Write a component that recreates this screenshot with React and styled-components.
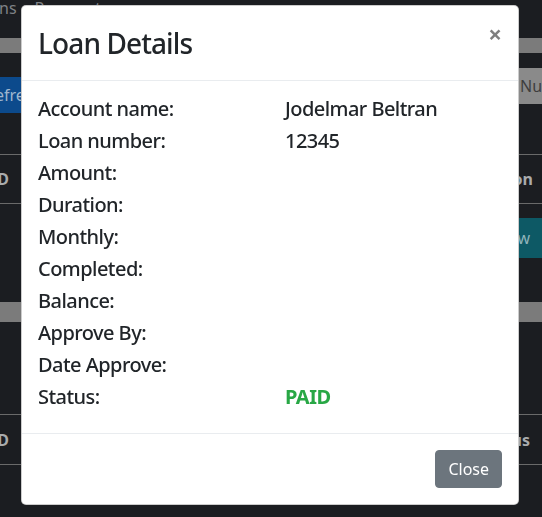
import styled, { createGlobalStyle } from "styled-components";

const GlobalStyle = createGlobalStyle`
  html, body {
    margin: 0;
    padding: 0;
    background: #1b1d21;
    overflow: hidden;
  }
  body {
    font-family: "Noto Sans", "Open Sans", sans-serif;
    color: #212529;
  }
`;

const Page = styled.div`
  width: 542px;
  height: 517px;
  overflow: hidden;
  display: flex;
  flex-direction: column;
  background: #1b1d21;
`;

const Nav = styled.nav`
  display: flex;
  gap: 18px;
  margin: -4px 0 0 -28px;
  height: 24px;
  font-size: 16px;
  line-height: 24px;
  color: #7f8286;
`;

const Band = styled.div`
  height: ${({ h }) => h}px;
  margin-top: ${({ top }) => top}px;
  background: #7b7b7b;
`;

const Toolbar = styled.div`
  display: flex;
  justify-content: space-between;
  align-items: flex-start;
  margin-top: 15px;
  height: 45px;
  margin-left: -27px;
`;

const RefreshButton = styled.div`
  margin-top: 9px;
  height: 36px;
  padding: 0 12px;
  display: flex;
  align-items: center;
  background: #0c4a8c;
  color: #9fb6cf;
  font-size: 16px;
  border-radius: 4px;
`;

const SearchInput = styled.div`
  width: 132px;
  height: 36px;
  margin-right: -100px;
  display: flex;
  align-items: center;
  padding-left: 10px;
  background: #8a8a8a;
  color: #3e3e3e;
  font-size: 16px;
  box-sizing: border-box;
`;

const TableHead = styled.div`
  display: flex;
  justify-content: space-between;
  align-items: center;
  height: ${({ h }) => h}px;
  margin: ${({ top }) => top}px 0 0 -9px;
  padding-right: ${({ pr }) => pr}px;
  border-top: 1px solid #6a6a6a;
  border-bottom: 1px solid #6a6a6a;
  font-weight: 700;
  font-size: 16px;
  color: #a9abad;
`;

const TableRow = styled.div`
  display: flex;
  justify-content: flex-end;
  padding-top: 14px;
  height: 86px;
  box-sizing: border-box;
`;

const ViewButton = styled.div`
  height: 40px;
  padding: 0 12px;
  display: flex;
  align-items: center;
  background: #0d5965;
  color: #8fb3ba;
  font-size: 16px;
  border-radius: 4px 0 0 4px;
`;

const Modal = styled.div`
  position: fixed;
  top: 5px;
  left: 21px;
  width: 498px;
  box-sizing: border-box;
  background: #fff;
  border: 1px solid rgba(0, 0, 0, 0.2);
  border-radius: 5px;
  display: flex;
  flex-direction: column;
`;

const Header = styled.div`
  display: flex;
  align-items: flex-start;
  padding: 16px;
  border-bottom: 1px solid #e9ecef;
`;

const Title = styled.h3`
  margin: 0;
  font-size: 28px;
  font-weight: 500;
  line-height: 1.5;
  letter-spacing: -0.9px;
  color: #212529;
`;

const CloseX = styled.button`
  margin: -16px -16px -16px auto;
  padding: 16px;
  background: transparent;
  border: 0;
  font-family: inherit;
  font-size: 24px;
  font-weight: 700;
  line-height: 1;
  color: #000;
  opacity: 0.5;
  text-shadow: 0 1px 0 #fff;
`;

const Body = styled.div`
  padding: 16px;
  display: grid;
  grid-template-columns: 1fr 1fr;
  column-gap: 30px;
`;

const Field = styled.h5`
  margin: 0 0 8px;
  font-size: 20px;
  line-height: 1.2;
  letter-spacing: -0.55px;
  color: ${({ tone }) => (tone === "paid" ? "#28a745" : "#212529")};
  font-weight: ${({ tone }) => (tone === "paid" ? 700 : 500)};
`;

const Footer = styled.div`
  display: flex;
  justify-content: flex-end;
  padding: 12px;
  border-top: 1px solid #e9ecef;
`;

const CloseButton = styled.button`
  margin: 4px;
  height: 38px;
  padding: 6px 12px;
  background: #6c757d;
  border: 1px solid #6c757d;
  border-radius: 4px;
  color: #fff;
  font-family: inherit;
  font-size: 16px;
  line-height: 1.5;
`;

const details = [
  ["Account name:", "Jodelmar Beltran"],
  ["Loan number:", "12345"],
  ["Amount:", ""],
  ["Duration:", ""],
  ["Monthly:", ""],
  ["Completed:", ""],
  ["Balance:", ""],
  ["Approve By:", ""],
  ["Date Approve:", ""],
  ["Status:", "PAID"],
];

export default function App() {
  return (
    <>
      <GlobalStyle />
      <Page>
        <Nav>
          <span>Loans</span>
          <span>Payments</span>
        </Nav>
        <Band top={18} h={15} />
        <Toolbar>
          <RefreshButton>Refresh</RefreshButton>
          <SearchInput>Number</SearchInput>
        </Toolbar>
        <TableHead top={41} h={48} pr={9}>
          <span>ID</span>
          <span>Action</span>
        </TableHead>
        <TableRow>
          <ViewButton>View</ViewButton>
        </TableRow>
        <Band top={12} h={20} />
        <TableHead top={92} h={49} pr={12}>
          <span>ID</span>
          <span>Status</span>
        </TableHead>
      </Page>

      <Modal>
        <Header>
          <Title>Loan Details</Title>
          <CloseX>×</CloseX>
        </Header>
        <Body>
          {details.map(([label, value]) => [
            <Field key={label}>{label}</Field>,
            <Field key={label + "-value"} tone={value === "PAID" ? "paid" : ""}>
              {value || "\u00a0"}
            </Field>,
          ])}
        </Body>
        <Footer>
          <CloseButton>Close</CloseButton>
        </Footer>
      </Modal>
    </>
  );
}
